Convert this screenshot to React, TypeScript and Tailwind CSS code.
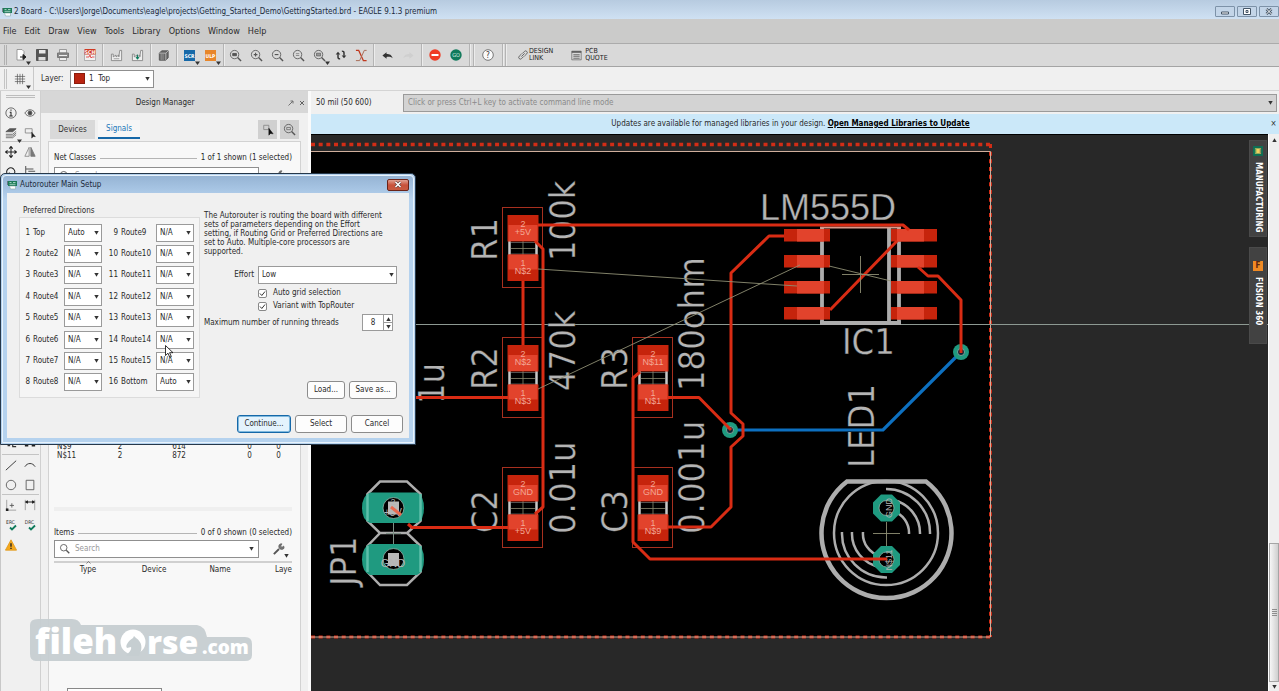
import React from 'react';

type Kids = { children?: React.ReactNode };

const Ico = ({ children, s = 14 }: Kids & { s?: number }) => (
  <svg width={s} height={s} viewBox="0 0 14 14" fill="none" stroke="#555" strokeWidth="1" className="shrink-0">
    {children}
  </svg>
);

const Tool = ({ label, children, drop }: Kids & { label: string; drop?: boolean }) => (
  <button aria-label={label} className="relative flex h-5 w-[21px] items-center justify-center">
    {children}
    {drop && (
      <svg width="5" height="4" viewBox="0 0 5 4" className="absolute right-0 bottom-0">
        <path d="M0 .5h5L2.5 4z" fill="#333" />
      </svg>
    )}
  </button>
);

const Group = ({ children, w }: Kids & { w: string }) => (
  <div className={`flex h-full shrink-0 items-center justify-center border-r border-[#b4b4b4] shadow-[1px_0_0_#ececec] ${w}`}>{children}</div>
);

const Lens = ({ children }: Kids) => (
  <Ico s={13}>
    <circle cx="6" cy="6" r="4.500" strokeWidth=".9" />
    <path d="M9.200 9.200l3.800 3.800" strokeWidth="1.500" />
    {children}
  </Ico>
);

const Arrow = ({ className = '' }: { className?: string }) => (
  <svg width="5" height="4" viewBox="0 0 5 4" className={`pointer-events-none ${className}`}>
    <path d="M.3 0h4.400L2.500 3.800z" fill="#333" />
  </svg>
);

const BoardIcon = () => (
  <svg width="11" height="10" viewBox="0 0 11 10" className="shrink-0">
    <path d="M1 1h9v5H1z" fill="#1c7a58" />
    <path d="M2.500 2.500h2M6 2.500h2.500M2.500 4.300h6" stroke="#bfe6d5" strokeWidth=".8" />
    <path d="M2.500 6h6v3h-5z" fill="#fff" stroke="#8aa" strokeWidth=".6" />
    <path d="M0 1v4" stroke="#333" strokeWidth="1" />
  </svg>
);

function Toolbar() {
  return (
    <div className="flex h-6 shrink-0 items-center border-t border-b border-t-[#ababab] border-b-[#a4a4a4] bg-[#d9d9d9]">
      <div className="ml-1 h-5 w-[3px] shrink-0 border-x border-[#b0b0b0]" />
      <Group w="w-[70px]">
        <Tool label="New" drop>
          <Ico><path d="M3 1.500h5l2 2V12H3z" fill="#fff" stroke="#888" strokeWidth=".8" /><path d="M6 9h5M9 6.500L12 9l-3 2.500z" stroke="#222" fill="#222" /></Ico>
        </Tool>
        <Tool label="Save">
          <Ico><path d="M1.500 1.500h11v11h-11z" fill="#555" /><path d="M4 2h6.500v3.500H4z" fill="#e8e8e8" stroke="none" /><path d="M3.500 9h7v3.500h-7z" fill="#ddd" stroke="none" /></Ico>
        </Tool>
        <Tool label="Print">
          <Ico><path d="M3.500 1.500h7V5h-7zM3.500 9h7v3.500h-7z" fill="#eee" stroke="#888" strokeWidth=".8" /><path d="M1.500 5h11v4.500h-11z" fill="#888" stroke="#777" /><path d="M3 7.500h8" stroke="#eee" /></Ico>
        </Tool>
      </Group>
      <Group w="w-[26px]">
        <Tool label="Schematic">
          <svg width="14" height="14" viewBox="0 0 14 14">
            <path d="M1.500 5h11v7.500h-11z" fill="#f1f1f1" stroke="#999" strokeWidth=".7" />
            <path d="M3 9h3l1-2 1 3 1-1h2.500" stroke="#d33" fill="none" strokeWidth=".8" />
            <path d="M1.500 1h11v5.500h-11z" fill="#cf3a24" />
            <text x="7" y="5.500" textAnchor="middle" fontSize="5" fontWeight="700" fill="#fff">SCH</text>
          </svg>
        </Tool>
      </Group>
      <Group w="w-[48px]">
        <Tool label="Manufacturing preview">
          <Ico s={13}><path d="M1.500 12.500V5.500h2v3l3-2v2l3-2v2l1-7h2v11z" fill="#eee" stroke="#777" strokeWidth=".8" /><path d="M4 10.500h6" stroke="#999" /></Ico>
        </Tool>
        <Tool label="Manufacturing export">
          <Ico s={13}><path d="M1.500 12.500V5.500h2v3l3-2v2l3-2v2l1-7h2v11z" fill="#eee" stroke="#777" strokeWidth=".8" /><path d="M7 6v5M5.500 9l1.500 2L8.500 9z" stroke="#0b7a5c" fill="#0b7a5c" /></Ico>
        </Tool>
      </Group>
      <Group w="w-[26px]">
        <Tool label="Library">
          <Ico s={13}><path d="M2.500 4.500L5 2h7v7.500L9.500 12h-7z" fill="#666" /><path d="M2.500 4.500h7V12M9.500 4.500L12 2" stroke="#ccc" strokeWidth=".8" /><path d="M4.500 5v7M6.500 5v7" stroke="#999" /></Ico>
        </Tool>
      </Group>
      <Group w="w-[47px]">
        <Tool label="Script" drop>
          <svg width="13" height="13" viewBox="0 0 13 13"><path d="M1 1h11v11H1z" fill="#1668a8" /><text x="6.500" y="8.500" textAnchor="middle" fontSize="5" fontWeight="700" fill="#fff">SCR</text></svg>
        </Tool>
        <Tool label="ULP" drop>
          <svg width="13" height="13" viewBox="0 0 13 13"><path d="M1 1h11v11H1z" fill="#e8862a" /><text x="6.500" y="8.500" textAnchor="middle" fontSize="5" fontWeight="700" fill="#fff">ULP</text></svg>
        </Tool>
      </Group>
      <Group w="w-[150px]">
        <Tool label="Zoom to fit"><Lens><path d="M4 4.800h4v2.400H4z" fill="#555" /></Lens></Tool>
        <Tool label="Zoom in"><Lens><path d="M4 6h4M6 4v4" strokeWidth="1.200" /></Lens></Tool>
        <Tool label="Zoom out"><Lens><path d="M4 6h4" strokeWidth="1.200" /></Lens></Tool>
        <Tool label="Zoom redraw"><Lens><path d="M4.200 5h3.600M4.200 7h3.600" stroke="#888" /></Lens></Tool>
        <Tool label="Zoom select" drop><Lens><path d="M3.800 4.500h4.400v3H3.800z" fill="#999" strokeWidth=".7" /></Lens></Tool>
        <Tool label="Refresh">
          <Ico s={12}><path d="M3.500 6v3.500q0 2 2.500 2M10.500 8V4.500q0-2-2.500-2" stroke="#333" strokeWidth="1.700" /><path d="M.8 6.500l2.700-3.300 2.700 3.300zM7.800 7.500l2.700 3.300 2.700-3.300z" fill="#333" stroke="none" /></Ico>
        </Tool>
        <Tool label="Ratsnest">
          <Ico s={13}><path d="M1 1.500h3L9 12.500h3.500" stroke="#c0391f" strokeWidth="1.300" /><path d="M12.500 1.500H10L5 12.500H1" stroke="#a5664f" strokeWidth="1" /></Ico>
        </Tool>
      </Group>
      <Group w="w-[48px]">
        <Tool label="Undo"><Ico s={13}><path d="M1.500 7L6 3.500v2c3.500 0 5.500 1 6.500 4.500C11 8.500 9 8.300 6 8.500v2z" fill="#333" stroke="none" /></Ico></Tool>
        <Tool label="Redo"><Ico s={13}><path d="M12.500 7L8 3.500v2C4.500 5.500 2.500 6.500 1.500 10 3 8.500 5 8.300 8 8.500v2z" fill="#cfcfcf" stroke="none" /></Ico></Tool>
      </Group>
      <Group w="w-[48px]">
        <Tool label="Stop"><Ico><circle cx="7" cy="7" r="5.700" fill="#ef3b24" stroke="none" /><path d="M3.500 7h7" stroke="#fff" strokeWidth="2" /></Ico></Tool>
        <Tool label="Go">
          <svg width="14" height="14" viewBox="0 0 14 14"><circle cx="7" cy="7" r="5.700" fill="#0f7a5c" /><text x="7" y="9" textAnchor="middle" fontSize="5.500" fill="#d5efe6">GO</text></svg>
        </Tool>
      </Group>
      <Group w="w-1" />
      <Group w="w-[29px]">
        <Tool label="Help">
          <svg width="14" height="14" viewBox="0 0 14 14"><circle cx="7" cy="7" r="5.300" fill="#fafafa" stroke="#777" /><text x="7" y="10" textAnchor="middle" fontSize="8" fill="#333">?</text></svg>
        </Tool>
      </Group>
      <Group w="w-[3px]" />
      <button className="ml-3 flex items-center gap-px">
        <Ico s={10}><path d="M6 5l3-3a2.300 2.300 0 013.300 3.300L9 8.500M8 9l-3 3a2.300 2.300 0 01-3.300-3.300L5 5.500M4.800 9.200l4.500-4.500" strokeWidth="1.200" /></Ico>
        <span className="text-left text-[7px] leading-[7px] text-[#222]">DESIGN<br />LINK</span>
      </button>
      <button className="ml-[18px] flex items-center gap-[3px]">
        <Ico s={11}><path d="M1 1.500h12v11H1z" strokeWidth=".8" /><path d="M1 2.500h12" strokeWidth="2" /><path d="M3 6h8M3 8h8M3 10.500h8" /></Ico>
        <span className="text-left text-[7px] leading-[7px] text-[#222]">PCB<br />QUOTE</span>
      </button>
    </div>
  );
}

function LeftTools() {
  return (
    <div className="flex w-[41px] shrink-0 flex-col border-r border-l border-r-[#d0d0d0] border-l-[#c8c8c8] bg-[#f0f0f0] px-px">
      <div className="mx-1 mt-1 mb-[5px] h-[3px] shrink-0 border-y border-[#bdbdbd]" />
      <div className="grid h-[39px] shrink-0 grid-cols-2 items-center justify-items-center border-b border-[#c4c4c4]">
        <Tool label="Info"><Ico s={12}><circle cx="7" cy="7" r="6" /><path d="M5.500 6H7v4M5 10.500h4M7 3v1.500" stroke="#222" strokeWidth="1.200" /></Ico></Tool>
        <Tool label="Show"><Ico s={12}><path d="M1 7c3-5 9-5 12 0-3 5-9 5-12 0z" /><circle cx="7" cy="7" r="2.300" fill="#444" /></Ico></Tool>
        <Tool label="Layers" drop><Ico s={12}><path d="M1 5.500L5.500 2H13L9 5.500z" fill="#555" /><path d="M1 8.500h8l4-3.500M1 10.500h8l4-3.500M1 12.500h8l4-3.500" strokeWidth=".9" /></Ico></Tool>
        <Tool label="Mark"><Ico s={12}><path d="M1.500 2h8v5h-8z" stroke="#888" /><path d="M9 6v7l1.700-2 2.600.3z" fill="#222" stroke="#222" strokeWidth=".5" /></Ico></Tool>
      </div>
      <div className="flex h-[313px] shrink-0 flex-col justify-between border-b border-[#c4c4c4]">
        <div className="grid grid-cols-2 justify-items-center">
          <Tool label="Move"><Ico s={12}><path d="M7 1v12M1 7h12M5 3l2-2.500L9 3M5 11l2 2.500L9 11M3 5L.5 7 3 9M11 5l2.500 2L11 9" stroke="#222" strokeWidth="1.200" /></Ico></Tool>
          <Tool label="Mirror"><Ico s={12}><path d="M6 1.500V12H1z" stroke="#888" /><path d="M8 1.500V12h5z" fill="#777" stroke="#777" /></Ico></Tool>
          <Tool label="Rotate"><Ico s={12}><path d="M3 10.500C-.5 4 6 0 10 3.500c3 3 1 6-1.500 7.500M1 10.500h4v-3" stroke="#222" strokeWidth="1.200" /></Ico></Tool>
          <Tool label="Align"><Ico s={12}><path d="M2 0v14M2 3.500h9M5 6h8" stroke="#555" strokeWidth="1.200" /></Ico></Tool>
        </div>
        <div className="grid grid-cols-2 justify-items-center">
          <Tool label="Miter"><Ico s={12}><path d="M2 5l3 4M9 4v6h4M3 9h3" stroke="#333" strokeWidth="1.400" /></Ico></Tool>
          <Tool label="Split"><Ico s={12}><path d="M1 8.500h4M9 8.500h4" stroke="#222" strokeWidth="2.600" /></Ico></Tool>
        </div>
      </div>
      <div className="grid h-10 shrink-0 grid-cols-2 items-center justify-items-center border-b border-[#c4c4c4]">
        <Tool label="Line"><Ico s={12}><path d="M1 13L13 2" stroke="#222" /></Ico></Tool>
        <Tool label="Arc"><Ico s={12}><path d="M1 9c3-5 9-5 12 0" stroke="#222" /></Ico></Tool>
        <Tool label="Circle"><Ico s={12}><circle cx="7" cy="7" r="5.500" /></Ico></Tool>
        <Tool label="Rectangle"><Ico s={12}><path d="M2.500 1.500h9v11h-9z" /></Ico></Tool>
      </div>
      <div className="grid shrink-0 grid-cols-2 justify-items-center">
        <Tool label="Hole"><Ico s={12}><path d="M2 1v12h11" stroke="#999" /><path d="M5.500 7.500h5M8 5v5" stroke="#555" /><path d="M1 11h3v3H1z" fill="#222" stroke="none" /></Ico></Tool>
        <Tool label="Dimension"><Ico s={12}><path d="M1.500 1v12M12.500 1v12" stroke="#999" /><path d="M2 3.500h10M4.500 2L2 3.500 4.500 5M9.500 2L12 3.500 9.500 5" stroke="#222" strokeWidth="1.200" /></Ico></Tool>
        {['ERC', 'DRC'].map((t) => (
          <Tool key={t} label={t}>
            <svg width="12" height="14" viewBox="0 0 12 14"><text x="5.500" y="6" textAnchor="middle" fontSize="5" fill="#333">{t}</text><path d="M5 9.500l2 2 4-4" fill="none" stroke="#0f7a5c" strokeWidth="1.800" /></svg>
          </Tool>
        ))}
        <Tool label="Errors"><Ico s={12}><path d="M7 1l6.500 12H.5z" fill="#f5a81c" stroke="#e09a20" /><path d="M7 5v4M7 10.300v1.500" stroke="#222" strokeWidth="1.600" /></Ico></Tool>
      </div>
    </div>
  );
}

const Head = ({ title, count }: { title: string; count: string }) => (
  <div className="flex items-center gap-1">
    <span>{title}</span>
    <span className="h-px flex-1 bg-[#b5b5b5]" />
    <span>{count}</span>
  </div>
);

const SearchRow = ({ id }: { id: string }) => (
  <div className="flex items-center">
    <div className="flex h-[18px] w-[205px] items-center border border-[#8f8f8f] bg-white px-1">
      <Ico s={12}><circle cx="5.500" cy="5.500" r="3.800" /><path d="M8.500 8.500l3.500 3.500" strokeWidth="1.500" /></Ico>
      <input id={id} aria-label="Search" placeholder="Search" className="ml-1 w-0 flex-1 bg-transparent outline-none placeholder:text-[#999]" />
      <Arrow />
    </div>
    <button aria-label="Settings" className="relative ml-[14px] flex h-[18px] w-4 items-center">
      <Ico s={12}><path d="M1 13l6-6" stroke="#555" strokeWidth="2.200" /><path d="M12.500 3.500l-2 1.500-1.500-1.500L10.500 1C7.500.5 6 3 7 5.500S11.500 8 13 6z" fill="#777" strokeWidth=".7" /></Ico>
      <Arrow className="absolute right-0 bottom-0" />
    </button>
  </div>
);

function Manager() {
  return (
    <div className="flex w-[267px] shrink-0 flex-col bg-[#f0f0f0]">
      <div className="flex h-[22px] shrink-0 items-center bg-[#d7d7d7] pt-px pr-[3px] pl-px">
        <span className="flex-1 text-center">Design Manager</span>
        <button aria-label="Undock" className="w-[11px]"><svg width="6" height="6" viewBox="0 0 6 6"><path d="M.5 5.500l4-4M2.500 1h2.500v2.500" fill="none" stroke="#555" strokeWidth=".8" /></svg></button>
        <button aria-label="Close" className="w-[6px]"><svg width="6" height="6" viewBox="0 0 6 6"><path d="M1 1l4 4M5 1L1 5" stroke="#444" strokeWidth=".8" /></svg></button>
      </div>
      <div className="mt-[7px] flex h-[19px] shrink-0 px-[9px]">
        <button className="w-[45px] bg-[#d9d9d9] text-[#333]">Devices</button>
        <button className="ml-[3px] w-[42px] border-b-2 border-[#1668a8] bg-[#f6f6f6] text-[#1a78ba]">Signals</button>
        <span className="flex-1" />
        <button aria-label="Pick" className="flex w-[19px] items-center justify-center bg-[#d0d0d0]"><Ico s={12}><path d="M2 1.500h6v5H2z" stroke="#888" /><path d="M8 5v8l2-2 3 .5z" fill="#111" stroke="#111" strokeWidth=".6" /></Ico></button>
        <button aria-label="Zoom" className="ml-[3px] flex w-[19px] items-center justify-center bg-[#d0d0d0]"><Lens><path d="M4 4.800h4v2.400H4z" strokeWidth=".7" /></Lens></button>
      </div>
      <div className="mx-[7px] mt-[2px] flex min-h-0 flex-1 flex-col border-x border-t border-[#d2d2d2] bg-[#f8f8f8] pt-[10px] pr-2 pl-[5px]">
        <Head title="Net Classes" count="1 of 1 shown (1 selected)" />
        <div className="h-[347px] shrink-0 border-b-4 border-[#efefef] pt-[3px]">
          <SearchRow id="net-search" />
          <table className="mt-[257px] w-full table-fixed text-center leading-[9px]">
            <tbody>
              {[['N$9', '614'], ['N$11', '872']].map(([n, l]) => (
                <tr key={n}>
                  <td className="w-[46px] pl-[3px] text-left">{n}</td>
                  <td className="w-10">2</td>
                  <td className="w-[78px]">{l}</td>
                  <td className="w-[47px] pl-4">0</td>
                  <td>0</td>
                </tr>
              ))}
            </tbody>
          </table>
        </div>
        <div className="mt-4"><Head title="Items" count="0 of 0 shown (0 selected)" /></div>
        <div className="mt-px"><SearchRow id="item-search" /></div>
        <table className="mt-[3px] w-full border-t-2 border-[#d0d0d0] text-center">
          <thead>
            <tr className="h-[14px]">
              <th className="w-[68px] font-normal">
                <span className="relative">Type
                  <svg width="5" height="3" viewBox="0 0 5 3" className="absolute -top-1 left-[6px]"><path d="M.5 2.500l2-2 2 2" fill="none" stroke="#666" strokeWidth=".8" /></svg>
                </span>
              </th>
              <th className="w-16 font-normal">Device</th>
              <th className="w-[68px] font-normal">Name</th>
              <th className="text-right font-normal">Laye</th>
            </tr>
          </thead>
        </table>
        <div className="mt-auto flex h-[3px] pl-[13px]"><span className="w-[95px] border-x border-t border-[#888] bg-white" /></div>
      </div>
    </div>
  );
}

const Smd = ({ x, y, a, b }: { x: number; y: number; a: string; b: string }) => (
  <g transform={`translate(${x} ${y})`}>
    <rect x=".5" y=".5" width="40" height="80" fill="none" stroke="#a8301f" />
    <path d="M7.500 34v14M34.500 34v14" stroke="#c9c9c9" strokeWidth="2.500" />
    <path d="M9 35.500h24M9 47h24" stroke="#777" strokeWidth=".7" />
    <path d="M9 41.500h24M21 34v14" stroke="#8c8a70" strokeWidth=".8" />
    <rect x="5.500" y="8" width="31" height="26.500" fill="#c6240c" />
    <rect x="6.500" y="18" width="29" height="16" fill="#e2432c" />
    <rect x="5.500" y="47.500" width="31" height="26.500" fill="#c6240c" />
    <rect x="6.500" y="47.500" width="29" height="15" fill="#e2432c" />
    <g fill="#f3a795" textAnchor="middle" fontSize="9" className="font-['Liberation_Sans',sans-serif]">
      <text x="21" y="20">2</text><text x="21" y="28">{a}</text>
      <text x="21" y="59">1</text><text x="21" y="67">{b}</text>
    </g>
  </g>
);

const Via = ({ x, y }: { x: number; y: number }) => (
  <g><circle cx={x} cy={y} r="8" fill="#1f9a80" /><circle cx={x} cy={y} r="3.500" fill="#123" stroke="#8fb5aa" strokeWidth=".8" /></g>
);

const VERT: [string, number, number][] = [
  ['R1', 497, 261], ['100k', 575, 261], ['R2', 497, 390], ['470k', 575, 391], ['R3', 627, 390], ['180ohm', 704, 391],
  ['1u', 444, 404], ['JP1', 356, 586], ['C2', 497, 533], ['0.01u', 575, 534], ['C3', 627, 533], ['0.001u', 704, 534], ['LED1', 874, 468],
];

function Board() {
  return (
    <svg viewBox="311 134 957 557" preserveAspectRatio="xMinYMin slice" className="h-full w-full" role="img" aria-label="Board layout">
      <rect x="311" y="134" width="2000" height="1500" fill="#282828" />
      <rect x="311" y="134" width="2000" height="1" fill="#000" />
      <rect x="300" y="151.500" width="690.500" height="486" fill="#000" />
      <g fill="none" stroke="#d22d16">
        <path d="M311 144.500H991" strokeDasharray="4 3.670" strokeWidth="3.500" />
        <path d="M990.500 144V637" strokeDasharray="4 3.670" strokeWidth="3" />
        <path d="M311 637H991" strokeDasharray="4 3.670" strokeWidth="3" />
      </g>
      <path d="M300 151.500H990.500V637H300" fill="none" stroke="#cfae9c" strokeWidth="1" />
      <path d="M311 324.500H1268" stroke="#8d9992" strokeWidth="1" />

      <g fill="#b4b4b4" stroke="#000" strokeWidth=".3" fontSize="36" className="font-['DejaVu_Sans_Condensed','DejaVu_Sans',sans-serif]">
        {VERT.map(([t, x, y]) => (<text key={t} transform={`translate(${x} ${y}) rotate(-90)`}>{t}</text>))}
        <text x="842" y="354">IC1</text>
        <text x="760" y="220" className="font-['Liberation_Sans',sans-serif]">LM555D</text>
      </g>

      <g fill="none" stroke="#adadad">
        <path d="M822 227V323H899V227M889 227V323" strokeWidth="3.800" />
        <path d="M820 227.500H901" stroke="#d8998a" strokeWidth="2" />
        <path d="M820 323H901" strokeWidth="4" />
        <path d="M380 481.500H407L420.500 494V521L407 533L420.500 546V572L407 585H380L367.500 572V546L380 533L367.500 521V494ZM380 533H407" strokeWidth="2.500" />
        <path d="M847 481.500H926A65 65 0 1 1 847 481.500Z" strokeWidth="4.500" />
        <circle cx="886" cy="533" r="52" strokeWidth="2.500" />
        <path d="M886 489A44 44 0 0 1 930 534M893 500A34 34 0 0 1 920 534M893 511A23 23 0 0 1 909 534M842 532A44 44 0 0 0 887 577.500M852 532A34 34 0 0 0 880 567M863 532A23 23 0 0 0 880 556" strokeWidth="2.500" />
      </g>

      <path d="M730 430H883L961 352" fill="none" stroke="#0d70c0" strokeWidth="3.200" />
      <g fill="#1f9a80">
        <path d="M370 492.500H417Q424 496 424 508T417 523H370Q362 520 362 508T370 492.500Z" />
        <path d="M370 544H417Q424 547 424 559.500T417 575H370Q362 572 362 559.500T370 544Z" />
        <path d="M881 494.500h11l8 8v11l-8 8h-11l-8-8v-11zM881 546h11l8 8v11l-8 8h-11l-8-8v-11z" />
      </g>
      <path d="M367.500 494V521M420.500 494V521M367.500 546V572M420.500 546V572" stroke="#5dbfa9" strokeWidth="2.500" />
      <g fill="#000" stroke="#8fb5aa" strokeWidth=".8">
        <circle cx="393.500" cy="508" r="10.500" /><circle cx="393.500" cy="559" r="10.500" />
        <circle cx="886.500" cy="508" r="7.500" /><circle cx="886.500" cy="559.500" r="7.500" />
      </g>
      <path d="M388 501.500h11v13h-11zM388 553h11v13h-11z" fill="#b9b9b9" />
      <path d="M393.500 523V544M386 533.500H401" stroke="#7d8f85" />
      <g fill="#b5b5b5" textAnchor="middle" className="font-['Liberation_Sans',sans-serif]">
        <text x="393" y="505" fontSize="9">2</text>
        <text x="393" y="516" fontSize="10">+5V</text>
        <text x="393" y="567" fontSize="11">GND</text>
        <text fontSize="9" transform="translate(892 508) rotate(-90)">GND</text>
        <text fontSize="9" transform="translate(892 560) rotate(-90)">N$11</text>
      </g>

      <Smd x={502} y={207} a="+5V" b="N$2" />
      <Smd x={502} y={337} a="N$2" b="N$3" />
      <Smd x={632} y={337} a="N$11" b="N$1" />
      <Smd x={502} y={467} a="GND" b="+5V" />
      <Smd x={632} y={467} a="GND" b="N$9" />

      {[229, 255, 281, 307].map((y) => (
        <g key={y} fill="#c6240c">
          <rect x="784" y={y} width="46" height="12.500" /><rect x="891" y={y} width="46" height="12.500" />
          <path d={`M797 ${y}h27v12.500h-27zM897 ${y}h27v12.500h-27z`} fill="#e2432c" />
        </g>
      ))}
      <Via x={961} y={352} />
      <Via x={730} y={430} />
      <g fill="none" stroke="#d92c14" strokeWidth="3" strokeLinejoin="round">
        <path d="M538 225H903L909 230" />
        <path d="M535 241L543 249V507L535 514" />
        <path d="M523 281V345" />
        <path d="M400 397.500H508" />
        <path d="M640 372L633 378V542L650 559H887" />
        <path d="M668 397.500H699L731 430" />
        <path d="M784 236H769L731 273V413L743 424V436L731 447V507L711 527H668" />
        <path d="M408 524L412 527.500H508" />
        <path d="M830 310L897 241" />
        <path d="M918 267L928 276H938L961 300V353" />
        <path d="M391 507l10 8" stroke="#e8694f" />
      </g>
      <g fill="none" stroke="#8e8e74" strokeWidth=".9">
        <path d="M538 269L797 286M538 389L800 265M829 266L891 281" />
        <path d="M842 274.500H879M860.500 256V293M873 533.500H900M886.500 522V546" />
      </g>
    </svg>
  );
}

const Pick = ({ id, value, options, label, className = '' }: { id: string; value: string; options: string[]; label?: string; className?: string }) => (
  <span className={`relative block h-[18px] ${className}`}>
    <select id={id} aria-label={label} defaultValue={value} className="h-full w-full appearance-none border border-[#9a9a9a] bg-white pl-[3px] outline-none">
      {options.map((o) => (<option key={o}>{o}</option>))}
    </select>
    <Arrow className="absolute top-[7px] right-[3px]" />
  </span>
);

const DIR = ['Auto', 'N/A', '|', '-', '/', '\\', '*'];
const Btn = ({ children, w, main }: Kids & { w: string; main?: boolean }) => (
  <button className={`h-[18px] rounded-[3px] border ${main ? 'border-[#1668a8] bg-[#e4f3fd] shadow-[inset_0_0_0_1px_#7fb9de]' : 'border-[#8c8c8c] bg-[#fdfdfd]'} ${w}`}>{children}</button>
);

function Dialog() {
  const name = (n: number) => (n === 1 ? 'Top' : n === 16 ? 'Bottom' : `Route${n}`);
  const cell = (n: number) => (
    <div className="flex items-center" key={n}>
      <label htmlFor={`layer${n}`} className="flex">
        <span className="w-[10px] text-right">{n}</span>
        <span className={n > 8 ? 'ml-[3px] w-[35px]' : 'ml-[3px] w-[31px]'}>{name(n)}</span>
      </label>
      <Pick id={`layer${n}`} value={n === 1 || n === 16 ? 'Auto' : 'N/A'} options={DIR} className="w-[38px]" />
    </div>
  );
  return (
    <div role="dialog" aria-label="Autorouter Main Setup" className="absolute top-[173px] left-0 w-[416px] rounded-t-[5px] border border-[#26384a] bg-[#b5d2ee] p-px">
      <div className="rounded-t-[4px] border border-[#e8f3fc] bg-linear-to-b from-[#96b4d4] via-[#a5c3e2] to-[#b8d3ee] bg-[length:100%_24px] bg-no-repeat px-1 pb-1">
        <div className="flex h-[17px] items-center gap-[2px] text-[#1b2a3a]">
          <BoardIcon />
          <span className="flex-1">Autorouter Main Setup</span>
          <button aria-label="Close" className="flex h-3 w-[22px] items-center justify-center rounded-[2px] border border-[#6b2318] bg-linear-to-b from-[#e0a092] via-[#c8513a] to-[#c85a40]">
            <svg width="8" height="7" viewBox="0 0 8 7"><path d="M1.500 1l5 5M6.500 1l-5 5" stroke="#5a3a3a" strokeWidth="2.600" /><path d="M1.500 1l5 5M6.500 1l-5 5" stroke="#fff" strokeWidth="1.500" /></svg>
          </button>
        </div>
        <div className="bg-[#f0f0f0] pt-3 pr-[6px] pb-[5px] pl-3">
          <div className="flex items-start">
            <fieldset className="w-[181px]">
              <legend className="pl-1 leading-[12px]">Preferred Directions</legend>
              <div className="grid h-[181px] grid-flow-col grid-rows-8 justify-between border border-[#dcdcdc] bg-[#f5f5f5] py-1 pr-[5px] pl-0">
                {Array.from({ length: 16 }, (_, i) => cell(i + 1))}
              </div>
            </fieldset>
            <div className="ml-1 flex w-[193px] flex-col pt-[6px]">
              <p className="w-[182px] leading-[9px]">
                The Autorouter is routing the board with different sets of parameters depending on the Effort setting, if Routing Grid or Preferred Directions are set to Auto. Multiple-core processors are supported.
              </p>
              <div className="mt-[10px] flex items-center">
                <label htmlFor="effort" className="w-[50px] text-right">Effort</label>
                <Pick id="effort" value="Low" options={['Low', 'Medium', 'High']} className="ml-1 w-[139px]" />
              </div>
              {['Auto grid selection', 'Variant with TopRouter'].map((t) => (
                <label key={t} className="mt-[3px] ml-[54px] flex h-[10px] items-center gap-[6px] first-of-type:mt-1">
                  <span className="relative flex">
                    <input type="checkbox" defaultChecked className="size-[9px] appearance-none rounded-[2px] border border-[#888] bg-white" />
                    <svg width="9" height="9" viewBox="0 0 9 9" className="pointer-events-none absolute inset-0"><path d="M2 4.500l1.800 2L7 2.500" fill="none" stroke="#333" /></svg>
                  </span>
                  {t}
                </label>
              ))}
              <div className="mt-[3px] flex items-center">
                <label htmlFor="threads" className="w-[158px]">Maximum number of running threads</label>
                <div className="flex h-[17px] w-[31px] border border-[#9a9a9a] bg-white">
                  <input id="threads" defaultValue="8" className="w-0 flex-1 bg-transparent text-center outline-none" />
                  <span className="flex w-[9px] flex-col divide-y divide-[#9a9a9a] border-l border-[#9a9a9a]">
                    <button aria-label="Increase" className="flex flex-1 items-center justify-center"><Arrow className="rotate-180" /></button>
                    <button aria-label="Decrease" className="flex flex-1 items-center justify-center"><Arrow /></button>
                  </span>
                </div>
              </div>
              <div className="mt-[50px] flex justify-end gap-1"><Btn w="w-[38px]">Load...</Btn><Btn w="w-12">Save as...</Btn></div>
            </div>
          </div>
          <div className="mt-4 flex justify-end gap-1"><Btn w="w-[54px]" main>Continue...</Btn><Btn w="w-[52px]">Select</Btn><Btn w="w-[52px]">Cancel</Btn></div>
        </div>
      </div>
    </div>
  );
}

const Watermark = () => (
  <svg width="226" height="48" viewBox="28 616 226 48" className="pointer-events-none absolute top-[616px] left-7" role="img" aria-label="filehorse.com">
    <path d="M38 619h34q7 0 9 6h116q8 1 10 12h38q7 0 7 7v11q0 6-7 6H36q-6 0-6-7v-29q0-6 8-6z" fill="#c6ced1" fillOpacity=".95" />
    <g fill="#fff" fontWeight="800" className="font-['Open_Sans','Noto_Sans',sans-serif]">
      <text x="35" y="654" fontSize="35">fileh</text>
      <circle cx="133" cy="642" r="12.500" />
      <path d="M126 656c3-4 6-6 5-9l-4 1c-2-2 1-7 6-10l1-2 2 2c6 4 7 10 3 18z" fill="#c6ced1" />
      <text x="147" y="654" fontSize="32">rse</text>
      <text x="202" y="654" fontSize="19">.com</text>
    </g>
  </svg>
);

const SideTab = ({ children, icon, color, h }: Kids & { icon: string; color: string; h: string }) => (
  <button className={`flex w-[18px] flex-col items-center border border-[#4a4a4a] bg-[#424242] text-[8px] font-bold text-white ${h}`}>
    <span className={`flex size-[10px] items-center justify-center text-[8px] leading-none ${color}`}>{icon}</span>
    <span className="mt-[6px] [writing-mode:vertical-rl]">{children}</span>
  </button>
);

export default function App() {
  const winBtn = 'flex h-[11px] w-5 items-center justify-center rounded-[1px] border border-[#7d92a8] bg-[#c3d5e8]';
  return (
    <div className="relative flex h-screen min-h-0 flex-col overflow-hidden bg-[#f0f0f0] font-['DejaVu_Sans_Condensed','DejaVu_Sans',sans-serif] text-[8px] leading-[12px] text-[#2a2a2a]">
      <div className="flex h-[19px] shrink-0 items-center bg-linear-to-b from-[#b7cbe0] to-[#cfe1f3] pt-1 pl-[2px] text-[#1b2a3a]">
        <BoardIcon />
        <span className="ml-px flex-1 whitespace-nowrap">2 Board - C:\Users\Jorge\Documents\eagle\projects\Getting_Started_Demo\GettingStarted.brd - EAGLE 9.1.3 premium</span>
        <div className="flex gap-[2px]">
          <button aria-label="Minimize" className={winBtn}><svg width="8" height="7" viewBox="0 0 8 7"><path d="M.5 4h7v2h-7z" fill="#fff" stroke="#456" /></svg></button>
          <button aria-label="Restore" className={winBtn}><svg width="8" height="7" viewBox="0 0 8 7"><path d="M.5.500h7v6h-7zM3 2.500h2v2H3z" fill="#fff" stroke="#456" /></svg></button>
          <button aria-label="Close" className={winBtn}><svg width="8" height="7" viewBox="0 0 8 7"><path d="M1.500 1l5 5M6.500 1l-5 5" stroke="#456" strokeWidth="2.600" /><path d="M1.500 1l5 5M6.500 1l-5 5" stroke="#fff" /></svg></button>
        </div>
      </div>
      <nav className="flex h-6 shrink-0 items-center gap-2 bg-[#cbcbca] pl-[3px] text-[9px]">
        {['File', 'Edit', 'Draw', 'View', 'Tools', 'Library', 'Options', 'Window', 'Help'].map((m) => (<button key={m}>{m}</button>))}
      </nav>
      <Toolbar />
      <div className="flex h-6 shrink-0 items-center border-b border-[#d4d4d4] bg-[#f0f0f0]">
        <div className="ml-1 h-5 w-[3px] shrink-0 border-x border-[#c4c4c4]" />
        <div className="flex h-full w-[27px] items-center justify-center border-r border-[#c8c8c8]">
          <Tool label="Grid" drop><Ico s={12}><path d="M4 1v12M7 1v12M10 1v12M1 4h12M1 7h12M1 10h12" strokeWidth=".8" /></Ico></Tool>
        </div>
        <label htmlFor="layer" className="ml-[7px] w-[29px]">Layer:</label>
        <span className="relative flex h-[18px] w-[84px] items-center border border-[#8f8f8f] bg-white pl-[3px]">
          <span className="size-[11px] border border-[#8c1c0c] bg-[#b92410]" />
          <select id="layer" className="ml-1 h-full flex-1 appearance-none bg-transparent outline-none"><option>{'1\u00a0 Top'}</option></select>
          <Arrow className="absolute right-[3px]" />
        </span>
      </div>
      <div className="flex min-h-0 flex-1">
        <LeftTools />
        <Manager />
        <div className="flex min-w-0 flex-1 flex-col border-l-[3px] border-[#fafafa]">
          <div className="flex h-[23px] shrink-0 items-center pr-[2px] pl-[5px]">
            <span className="w-[87px]">50 mil (50 600)</span>
            <span className="relative flex h-[18px] flex-1 items-center border border-[#9a9a9a] bg-[#d3d3d3]">
              <input aria-label="Command line" placeholder="Click or press Ctrl+L key to activate command line mode" className="h-full flex-1 bg-transparent pl-1 outline-none placeholder:text-[#8a8a8a]" />
              <Arrow className="mr-[3px]" />
            </span>
          </div>
          <div className="flex h-5 shrink-0 items-center bg-[#cbe8f9]">
            <p className="flex-1 text-center">Updates are available for managed libraries in your design. <a href="#libraries" className="font-bold text-black underline">Open Managed Libraries to Update</a></p>
            <button aria-label="Dismiss" className="mr-[2px] w-[7px]">×</button>
          </div>
          <div className="flex min-h-0 flex-1">
            <div className="relative min-w-0 flex-1 overflow-hidden bg-[#282828]">
              <Board />
              <div className="absolute top-[6px] right-px flex flex-col gap-[10px]">
                <SideTab h="h-[97px] pt-[5px]" icon="▣" color="bg-[#0f6e54] text-[#f0d060]">MANUFACTURING</SideTab>
                <SideTab h="h-[97px] pt-[13px]" icon="F" color="bg-[#f08a24] text-[#5a2410]">FUSION 360</SideTab>
              </div>
            </div>
            <div className="flex w-[11px] shrink-0 flex-col items-center border-l border-white bg-[#efefef]">
              <Arrow className="mt-1 rotate-180" />
              <div className="mt-auto flex h-[139px] w-full items-center justify-center border border-[#a5a5a5] bg-linear-to-r from-[#f6f6f6] to-[#cfcfcf]">
                <svg width="5" height="7" viewBox="0 0 5 7"><path d="M0 .5h5M0 2.500h5M0 4.500h5M0 6.500h5" stroke="#777" strokeWidth=".8" /></svg>
              </div>
              <Arrow className="mt-[3px] mb-[2px] shrink-0" />
            </div>
          </div>
        </div>
      </div>
      <Dialog />
      <Watermark />
      <svg width="9" height="13" viewBox="0 0 9 13" className="pointer-events-none absolute top-[345px] left-[165px]">
        <path d="M.5.500v10l2.500-2.300 1.700 4 1.600-.7-1.700-3.800h3.400z" fill="#fff" stroke="#000" strokeWidth=".8" />
      </svg>
    </div>
  );
}
